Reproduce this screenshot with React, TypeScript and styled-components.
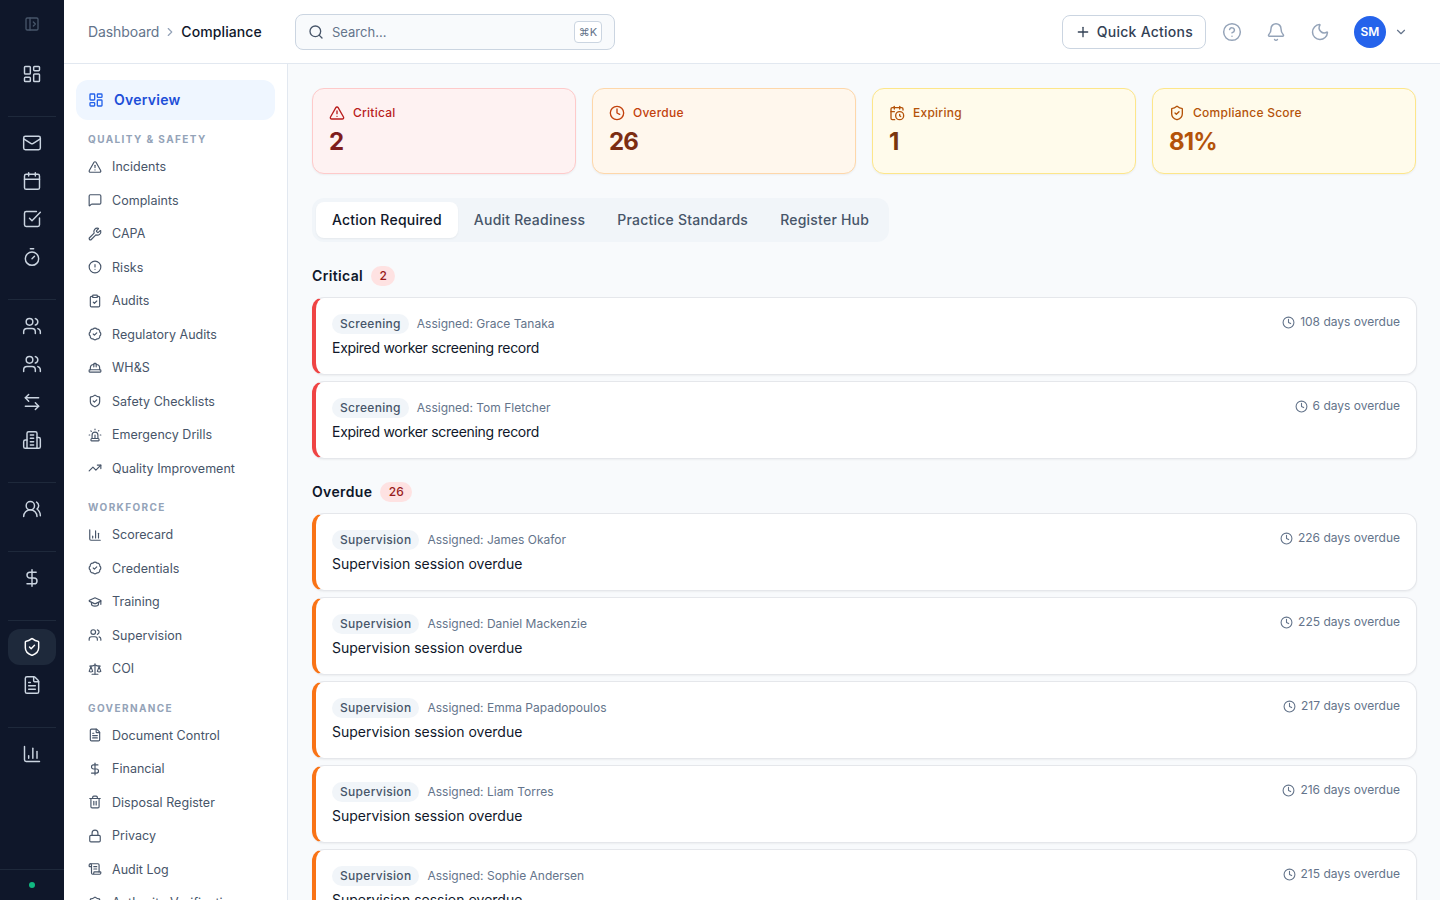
import styled, { createGlobalStyle } from 'styled-components';
import {
  ArrowLeftRight,
  BadgeCheck,
  Bell,
  CalendarClock,
  Calendar,
  ChartColumn,
  ChevronDown,
  ChevronRight,
  CircleAlert,
  CircleHelp,
  ClipboardCheck,
  Clock,
  DollarSign,
  FileText,
  GraduationCap,
  HardHat,
  LayoutDashboard,
  Lock,
  Mail,
  MessageSquare,
  Moon,
  PanelLeftOpen,
  Plus,
  Scale,
  ScrollText,
  Search,
  ShieldCheck,
  Siren,
  SquareCheckBig,
  Timer,
  Trash2,
  TrendingUp,
  TriangleAlert,
  Users,
  UsersRound,
  Wrench,
} from 'lucide-react';

const GlobalStyle = createGlobalStyle`
  html, body {
    margin: 0;
    height: 100%;
    overflow: hidden;
  }
  body {
    font-family: Inter, 'Liberation Sans', sans-serif;
    color: #0f172a;
  }
  * {
    box-sizing: border-box;
  }
`;

const Shell = styled.div`
  display: flex;
  width: 1440px;
  height: 900px;
  overflow: hidden;
  background: #f8fafc;
`;

const Rail = styled.aside`
  display: flex;
  flex-direction: column;
  width: 64px;
  flex-shrink: 0;
  height: 100%;
  background: #0f172a;
`;

const RailToggle = styled.div`
  display: flex;
  align-items: center;
  justify-content: center;
  height: 48px;
  color: #475569;
`;

const RailGroup = styled.div`
  display: flex;
  flex-direction: column;
  gap: 2px;
  padding: 8px 0 24px;
  margin: 0 8px;
  border-bottom: 1px solid #1e293b;
`;

const RailPlainGroup = styled(RailGroup)`
  border-bottom: none;
`;

const RailItem = styled.div<{ $active?: boolean }>`
  display: flex;
  align-items: center;
  justify-content: center;
  height: 36px;
  border-radius: 12px;
  color: ${(p) => (p.$active ? '#ffffff' : '#cbd5e1')};
  background: ${(p) => (p.$active ? '#1e293b' : 'transparent')};
`;

const RailFooter = styled.div`
  display: flex;
  justify-content: center;
  align-items: center;
  margin-top: auto;
  height: 31px;
  flex-shrink: 0;
  border-top: 1px solid #1e293b;
`;

const StatusDot = styled.span`
  width: 6px;
  height: 6px;
  border-radius: 50%;
  background: #10b981;
`;

const Column = styled.div`
  display: flex;
  flex-direction: column;
  flex: 1;
  min-width: 0;
`;

const Header = styled.header`
  display: flex;
  align-items: center;
  height: 64px;
  flex-shrink: 0;
  padding: 0 32px 0 24px;
  background: #ffffff;
  border-bottom: 1px solid #e2e8f0;
`;

const Breadcrumb = styled.nav`
  display: flex;
  align-items: center;
  gap: 4px;
  width: 207px;
  font-size: 14px;
  letter-spacing: -0.1px;
  color: #64748b;
  svg {
    color: #94a3b8;
  }
`;

const Crumb = styled.span`
  font-weight: 500;
  letter-spacing: 0.1px;
  color: #0f172a;
`;

const SearchBox = styled.div`
  display: flex;
  align-items: center;
  gap: 8px;
  width: 320px;
  height: 36px;
  padding: 0 12px;
  background: #f8fafc;
  border: 1px solid #cbd5e1;
  border-radius: 8px;
  font-size: 13px;
  color: #64748b;
  svg {
    color: #475569;
  }
`;

const SearchText = styled.span`
  flex: 1;
`;

const Kbd = styled.kbd`
  display: flex;
  align-items: center;
  justify-content: center;
  width: 28px;
  height: 22px;
  background: #ffffff;
  border: 1px solid #cbd5e1;
  border-radius: 4px;
  font-family: Inter, 'DejaVu Sans', sans-serif;
  font-size: 11px;
  color: #64748b;
`;

const HeaderRight = styled.div`
  display: flex;
  align-items: center;
  gap: 8px;
  margin-left: auto;
`;

const QuickButton = styled.button`
  display: flex;
  align-items: center;
  gap: 6px;
  height: 34px;
  padding: 0 12px;
  background: #ffffff;
  border: 1px solid #cbd5e1;
  border-radius: 8px;
  font-family: inherit;
  font-size: 14px;
  font-weight: 500;
  letter-spacing: 0.25px;
  color: #334155;
`;

const IconButton = styled.button`
  display: flex;
  align-items: center;
  justify-content: center;
  width: 36px;
  height: 36px;
  padding: 0;
  background: none;
  border: none;
  color: #94a3b8;
`;

const Avatar = styled.div`
  display: flex;
  align-items: center;
  justify-content: center;
  width: 32px;
  height: 32px;
  margin-left: 8px;
  border-radius: 50%;
  background: #2563eb;
  color: #ffffff;
  font-size: 12px;
  font-weight: 600;
`;

const AvatarCaret = styled.span`
  display: flex;
  color: #64748b;
`;

const Body = styled.div`
  display: flex;
  flex: 1;
  min-height: 0;
`;

const SideNav = styled.nav`
  width: 224px;
  flex-shrink: 0;
  padding: 16px 12px;
  background: #ffffff;
  border-right: 1px solid #e2e8f0;
  overflow: hidden;
`;

const OverviewLink = styled.div`
  display: flex;
  align-items: center;
  gap: 10px;
  height: 40px;
  padding: 0 12px;
  border-radius: 12px;
  background: #eff6ff;
  color: #1d4ed8;
  font-size: 14px;
  font-weight: 600;
  letter-spacing: 0.25px;
  svg {
    color: #2563eb;
  }
  span {
    padding-bottom: 2px;
  }
`;

const NavHeading = styled.div`
  height: 15px;
  margin: 0 0 3px;
  padding: 0 12px;
  font-size: 10px;
  line-height: 15px;
  font-weight: 700;
  letter-spacing: 0.14em;
  text-transform: uppercase;
  color: #94a3b8;
`;

const NavSection = styled.div`
  margin-top: 12px;
  & + & {
    margin-top: 15px;
  }
`;

const NavItem = styled.div`
  display: flex;
  align-items: center;
  gap: 10px;
  height: 33.5px;
  padding: 0 12px;
  font-size: 12.5px;
  letter-spacing: 0.03px;
  color: #475569;
  svg {
    flex-shrink: 0;
    color: #475569;
  }
`;

const Main = styled.main`
  flex: 1;
  min-width: 0;
  padding: 24px;
  overflow: hidden;
`;

const StatGrid = styled.div`
  display: grid;
  grid-template-columns: repeat(4, 1fr);
  gap: 16px;
`;

const tones = {
  red: { bg: '#fef2f2', border: '#fecaca', label: '#b91c1c', value: '#7f1d1d' },
  orange: { bg: '#fff7ed', border: '#fed7aa', label: '#c2410c', value: '#7c2d12' },
  amber: { bg: '#fffbeb', border: '#fde68a', label: '#b45309', value: '#78350f' },
  score: { bg: '#fffbeb', border: '#fde68a', label: '#b45309', value: '#b45309' },
};

type Tone = keyof typeof tones;

const StatCard = styled.div<{ $tone: Tone }>`
  height: 86px;
  padding: 15px 16px;
  border: 1px solid ${(p) => tones[p.$tone].border};
  border-radius: 12px;
  background: ${(p) => tones[p.$tone].bg};
  box-shadow: 0 1px 2px rgba(0, 0, 0, 0.05);
`;

const StatLabel = styled.div<{ $tone: Tone }>`
  display: flex;
  align-items: center;
  gap: 8px;
  height: 18px;
  font-size: 12px;
  font-weight: 500;
  letter-spacing: 0.25px;
  color: ${(p) => tones[p.$tone].label};
  span {
    padding-bottom: 2px;
  }
`;

const StatValue = styled.div<{ $tone: Tone }>`
  margin-top: 4px;
  font-size: 24px;
  line-height: 32px;
  font-weight: 700;
  letter-spacing: -0.8px;
  color: ${(p) => tones[p.$tone].value};
`;

const Tabs = styled.div`
  display: flex;
  width: fit-content;
  margin-top: 24px;
  padding: 4px;
  border-radius: 12px;
  background: #f1f5f9;
`;

const Tab = styled.div<{ $active?: boolean }>`
  display: flex;
  align-items: center;
  height: 36px;
  padding: 0 16px 2px;
  border-radius: 8px;
  font-size: 14px;
  font-weight: 500;
  letter-spacing: 0.22px;
  color: ${(p) => (p.$active ? '#0f172a' : '#475569')};
  background: ${(p) => (p.$active ? '#ffffff' : 'transparent')};
  box-shadow: ${(p) => (p.$active ? '0 1px 2px rgba(0, 0, 0, 0.05)' : 'none')};
`;

const Section = styled.section`
  margin-top: 24px;
  & + & {
    margin-top: 23px;
  }
`;

const SectionHead = styled.div`
  display: flex;
  align-items: center;
  gap: 8px;
  height: 20px;
  margin-bottom: 11px;
  font-size: 14px;
  font-weight: 600;
  letter-spacing: 0.35px;
`;

const SectionTitle = styled.span`
  padding-bottom: 2px;
`;

const CountBadge = styled.span`
  display: flex;
  align-items: center;
  height: 20px;
  padding: 0 8.5px 1px;
  border-radius: 999px;
  background: #fee2e2;
  color: #991b1b;
  font-size: 12px;
  font-weight: 500;
  letter-spacing: 0;
`;

const TaskList = styled.div`
  display: flex;
  flex-direction: column;
  gap: 6px;
  margin-right: -1px;
`;

const TaskCard = styled.div<{ $accent: string }>`
  display: flex;
  justify-content: space-between;
  align-items: flex-start;
  height: 78px;
  flex-shrink: 0;
  padding: 16px;
  background: #ffffff;
  border: 1px solid #e5e7eb;
  border-left: 4px solid ${(p) => p.$accent};
  border-radius: 12px;
  box-shadow: 0 1px 2px rgba(0, 0, 0, 0.05);
`;

const TaskMeta = styled.div`
  display: flex;
  align-items: center;
  gap: 8px;
  height: 20px;
  font-size: 12px;
  color: #64748b;
`;

const TaskTag = styled.span`
  display: flex;
  align-items: center;
  height: 20px;
  padding: 0 8px 2px;
  border-radius: 999px;
  background: #f1f5f9;
  color: #475569;
  font-weight: 500;
  letter-spacing: 0.3px;
`;

const TaskAssignee = styled.span`
  padding-bottom: 2px;
`;

const TaskTitle = styled.div<{ $tight?: boolean }>`
  margin-top: 4px;
  font-size: 14px;
  line-height: 20px;
  letter-spacing: ${(p) => (p.$tight ? '-0.29px' : '0')};
  color: #0f172a;
`;

const TaskDue = styled.div`
  display: flex;
  align-items: center;
  gap: 5px;
  height: 16px;
  font-size: 12px;
  color: #64748b;
`;

const TaskDueText = styled.span`
  padding-bottom: 2px;
`;

function BuildingIcon() {
  return (
    <svg
      width="20"
      height="20"
      viewBox="0 0 24 24"
      fill="none"
      stroke="currentColor"
      strokeWidth="1.75"
      strokeLinecap="round"
      strokeLinejoin="round"
    >
      <path d="M6 22V4a2 2 0 0 1 2-2h8a2 2 0 0 1 2 2v18Z" />
      <path d="M6 12H4a2 2 0 0 0-2 2v6a2 2 0 0 0 2 2h2" />
      <path d="M18 9h2a2 2 0 0 1 2 2v9a2 2 0 0 1-2 2h-2" />
      <path d="M10 6h4" />
      <path d="M10 10h4" />
      <path d="M10 14h4" />
      <path d="M10 18h4" />
    </svg>
  );
}

const railGroups = [
  [LayoutDashboard],
  [Mail, Calendar, SquareCheckBig, Timer],
  [Users, Users, ArrowLeftRight, BuildingIcon],
  [UsersRound],
  [DollarSign],
];

const navSections = [
  {
    title: 'Quality & Safety',
    items: [
      { label: 'Incidents', icon: TriangleAlert },
      { label: 'Complaints', icon: MessageSquare },
      { label: 'CAPA', icon: Wrench },
      { label: 'Risks', icon: CircleAlert },
      { label: 'Audits', icon: ClipboardCheck },
      { label: 'Regulatory Audits', icon: BadgeCheck },
      { label: 'WH&S', icon: HardHat },
      { label: 'Safety Checklists', icon: ShieldCheck },
      { label: 'Emergency Drills', icon: Siren },
      { label: 'Quality Improvement', icon: TrendingUp },
    ],
  },
  {
    title: 'Workforce',
    items: [
      { label: 'Scorecard', icon: ChartColumn },
      { label: 'Credentials', icon: BadgeCheck },
      { label: 'Training', icon: GraduationCap },
      { label: 'Supervision', icon: Users },
      { label: 'COI', icon: Scale },
    ],
  },
  {
    title: 'Governance',
    items: [
      { label: 'Document Control', icon: FileText },
      { label: 'Financial', icon: DollarSign },
      { label: 'Disposal Register', icon: Trash2 },
      { label: 'Privacy', icon: Lock },
      { label: 'Audit Log', icon: ScrollText },
      { label: 'Authority Verification', icon: ShieldCheck },
    ],
  },
];

const stats = [
  { tone: 'red' as Tone, label: 'Critical', value: '2', icon: TriangleAlert },
  { tone: 'orange' as Tone, label: 'Overdue', value: '26', icon: Clock },
  { tone: 'amber' as Tone, label: 'Expiring', value: '1', icon: CalendarClock },
  { tone: 'score' as Tone, label: 'Compliance Score', value: '81%', icon: ShieldCheck },
];

const critical = [
  { name: 'Grace Tanaka', days: 108 },
  { name: 'Tom Fletcher', days: 6 },
];

const overdue = [
  { name: 'James Okafor', days: 226 },
  { name: 'Daniel Mackenzie', days: 225 },
  { name: 'Emma Papadopoulos', days: 217 },
  { name: 'Liam Torres', days: 216 },
  { name: 'Sophie Andersen', days: 215 },
];

type TaskProps = {
  accent: string;
  tag: string;
  name: string;
  title: string;
  days: number;
  tight?: boolean;
};

function Task({ accent, tag, name, title, days, tight }: TaskProps) {
  return (
    <TaskCard $accent={accent}>
      <div>
        <TaskMeta>
          <TaskTag>{tag}</TaskTag>
          <TaskAssignee>Assigned: {name}</TaskAssignee>
        </TaskMeta>
        <TaskTitle $tight={tight}>{title}</TaskTitle>
      </div>
      <TaskDue>
        <Clock size={13} />
        <TaskDueText>{days} days overdue</TaskDueText>
      </TaskDue>
    </TaskCard>
  );
}

function App() {
  return (
    <Shell>
      <GlobalStyle />
      <Rail>
        <RailToggle>
          <PanelLeftOpen size={16} />
        </RailToggle>
        {railGroups.map((group, i) => (
          <RailGroup key={i}>
            {group.map((Icon, j) => (
              <RailItem key={j}>
                <Icon size={20} strokeWidth={1.75} />
              </RailItem>
            ))}
          </RailGroup>
        ))}
        <RailGroup>
          <RailItem $active>
            <ShieldCheck size={20} strokeWidth={1.75} />
          </RailItem>
          <RailItem>
            <FileText size={20} strokeWidth={1.75} />
          </RailItem>
        </RailGroup>
        <RailPlainGroup>
          <RailItem>
            <ChartColumn size={20} strokeWidth={1.75} />
          </RailItem>
        </RailPlainGroup>
        <RailFooter>
          <StatusDot />
        </RailFooter>
      </Rail>
      <Column>
        <Header>
          <Breadcrumb>
            Dashboard
            <ChevronRight size={14} />
            <Crumb>Compliance</Crumb>
          </Breadcrumb>
          <SearchBox>
            <Search size={16} />
            <SearchText>Search...</SearchText>
            <Kbd>⌘K</Kbd>
          </SearchBox>
          <HeaderRight>
            <QuickButton>
              <Plus size={16} />
              Quick Actions
            </QuickButton>
            <IconButton>
              <CircleHelp size={20} strokeWidth={1.75} />
            </IconButton>
            <IconButton>
              <Bell size={20} strokeWidth={1.75} />
            </IconButton>
            <IconButton>
              <Moon size={20} strokeWidth={1.75} />
            </IconButton>
            <Avatar>SM</Avatar>
            <AvatarCaret>
              <ChevronDown size={14} />
            </AvatarCaret>
          </HeaderRight>
        </Header>
        <Body>
          <SideNav>
            <OverviewLink>
              <LayoutDashboard size={16} />
              <span>Overview</span>
            </OverviewLink>
            {navSections.map((section) => (
              <NavSection key={section.title}>
                <NavHeading>{section.title}</NavHeading>
                {section.items.map(({ label, icon: Icon }) => (
                  <NavItem key={label}>
                    <Icon size={14} />
                    {label}
                  </NavItem>
                ))}
              </NavSection>
            ))}
          </SideNav>
          <Main>
            <StatGrid>
              {stats.map(({ tone, label, value, icon: Icon }) => (
                <StatCard key={label} $tone={tone}>
                  <StatLabel $tone={tone}>
                    <Icon size={16} />
                    <span>{label}</span>
                  </StatLabel>
                  <StatValue $tone={tone}>{value}</StatValue>
                </StatCard>
              ))}
            </StatGrid>
            <Tabs>
              <Tab $active>Action Required</Tab>
              <Tab>Audit Readiness</Tab>
              <Tab>Practice Standards</Tab>
              <Tab>Register Hub</Tab>
            </Tabs>
            <Section>
              <SectionHead>
                <SectionTitle>Critical</SectionTitle>
                <CountBadge>2</CountBadge>
              </SectionHead>
              <TaskList>
                {critical.map((t) => (
                  <Task
                    key={t.name}
                    accent="#ef4444"
                    tag="Screening"
                    name={t.name}
                    title="Expired worker screening record"
                    days={t.days}
                    tight
                  />
                ))}
              </TaskList>
            </Section>
            <Section>
              <SectionHead>
                <SectionTitle>Overdue</SectionTitle>
                <CountBadge>26</CountBadge>
              </SectionHead>
              <TaskList>
                {overdue.map((t) => (
                  <Task
                    key={t.name}
                    accent="#f97316"
                    tag="Supervision"
                    name={t.name}
                    title="Supervision session overdue"
                    days={t.days}
                  />
                ))}
              </TaskList>
            </Section>
          </Main>
        </Body>
      </Column>
    </Shell>
  );
}

export default App;
